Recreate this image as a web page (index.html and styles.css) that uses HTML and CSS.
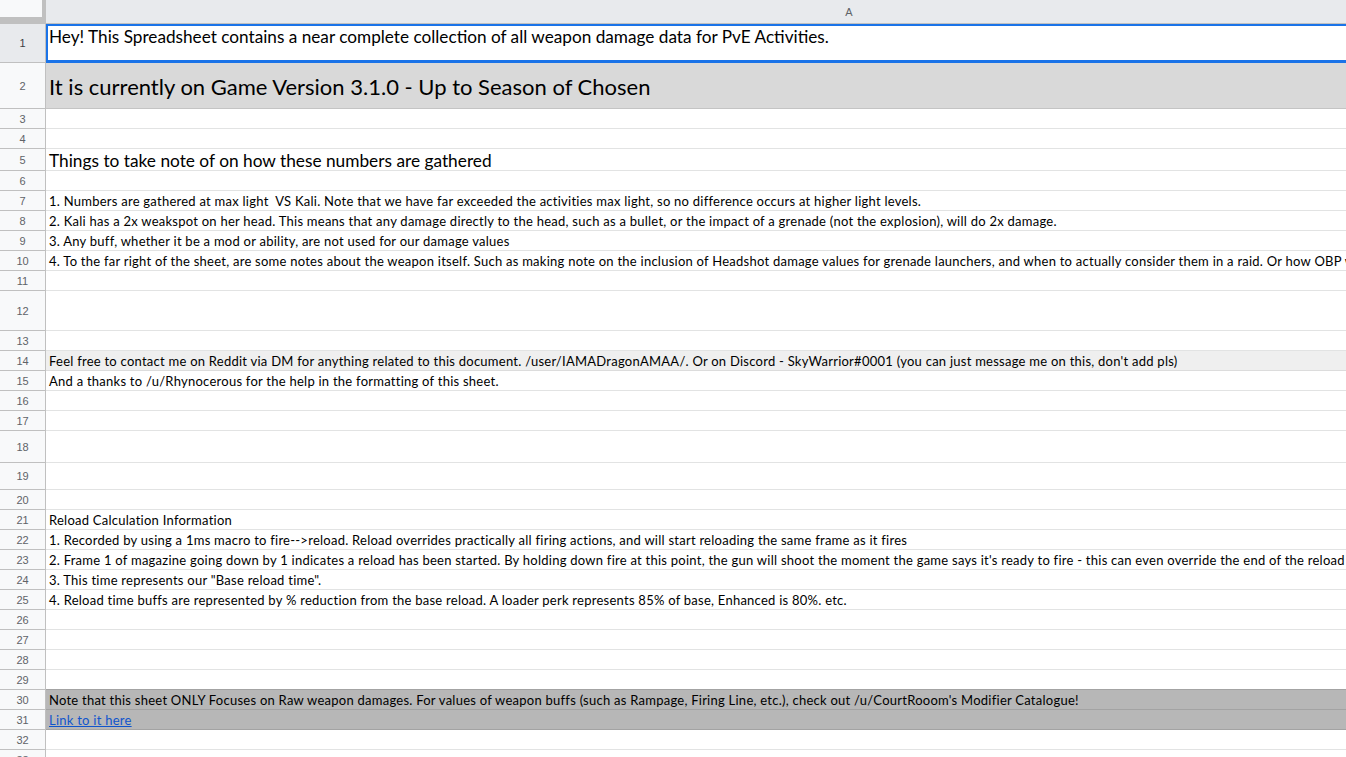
FILE: index.html
```html
<!DOCTYPE html>
<html>
<head>
<meta charset="utf-8">
<link rel="stylesheet" href="styles.css">
</head>
<body>
<div class="sheet">
  <div class="row head">
    <div class="corner"><div class="corner-in"></div></div>
    <div class="colhead">A</div>
  </div>
  <div class="row h39"><div class="rh sel">1</div><div class="cell c-title selected"><span>Hey! This Spreadsheet contains a near complete collection of all weapon damage data for PvE Activities.</span></div></div>
  <div class="row h46"><div class="rh">2</div><div class="cell c-big bg-d9"><span>It is currently on Game Version 3.1.0 - Up to Season of Chosen</span></div></div>
  <div class="row"><div class="rh">3</div><div class="cell"></div></div>
  <div class="row"><div class="rh">4</div><div class="cell"></div></div>
  <div class="row h22"><div class="rh">5</div><div class="cell c-sub"><span>Things to take note of on how these numbers are gathered</span></div></div>
  <div class="row"><div class="rh">6</div><div class="cell"></div></div>
  <div class="row"><div class="rh">7</div><div class="cell"><span>1. Numbers are gathered at max light  VS Kali. Note that we have far exceeded the activities max light, so no difference occurs at higher light levels.</span></div></div>
  <div class="row"><div class="rh">8</div><div class="cell"><span>2. Kali has a 2x weakspot on her head. This means that any damage directly to the head, such as a bullet, or the impact of a grenade (not the explosion), will do 2x damage.</span></div></div>
  <div class="row"><div class="rh">9</div><div class="cell"><span>3. Any buff, whether it be a mod or ability, are not used for our damage values</span></div></div>
  <div class="row"><div class="rh">10</div><div class="cell"><span>4. To the far right of the sheet, are some notes about the weapon itself. Such as making note on the inclusion of Headshot damage values for grenade launchers, and when to actually consider them in a raid. Or how OBP works with them.</span></div></div>
  <div class="row"><div class="rh">11</div><div class="cell"></div></div>
  <div class="row h40"><div class="rh">12</div><div class="cell"></div></div>
  <div class="row"><div class="rh">13</div><div class="cell"></div></div>
  <div class="row"><div class="rh">14</div><div class="cell bg-ef"><span>Feel free to contact me on Reddit via DM for anything related to this document. /user/IAMADragonAMAA/. Or on Discord - SkyWarrior#0001 (you can just message me on this, don't add pls)</span></div></div>
  <div class="row"><div class="rh">15</div><div class="cell"><span>And a thanks to /u/Rhynocerous for the help in the formatting of this sheet.</span></div></div>
  <div class="row"><div class="rh">16</div><div class="cell"></div></div>
  <div class="row"><div class="rh">17</div><div class="cell"></div></div>
  <div class="row h32"><div class="rh">18</div><div class="cell"></div></div>
  <div class="row h27"><div class="rh">19</div><div class="cell"></div></div>
  <div class="row"><div class="rh">20</div><div class="cell"></div></div>
  <div class="row"><div class="rh">21</div><div class="cell"><span>Reload Calculation Information</span></div></div>
  <div class="row"><div class="rh">22</div><div class="cell"><span>1. Recorded by using a 1ms macro to fire--&gt;reload. Reload overrides practically all firing actions, and will start reloading the same frame as it fires</span></div></div>
  <div class="row"><div class="rh">23</div><div class="cell"><span>2. Frame 1 of magazine going down by 1 indicates a reload has been started. By holding down fire at this point, the gun will shoot the moment the game says it's ready to fire - this can even override the end of the reload animation.</span></div></div>
  <div class="row"><div class="rh">24</div><div class="cell"><span>3. This time represents our "Base reload time".</span></div></div>
  <div class="row"><div class="rh">25</div><div class="cell"><span>4. Reload time buffs are represented by % reduction from the base reload. A loader perk represents 85% of base, Enhanced is 80%. etc.</span></div></div>
  <div class="row"><div class="rh">26</div><div class="cell"></div></div>
  <div class="row"><div class="rh">27</div><div class="cell"></div></div>
  <div class="row"><div class="rh">28</div><div class="cell"></div></div>
  <div class="row"><div class="rh">29</div><div class="cell dk-bottom"></div></div>
  <div class="row"><div class="rh">30</div><div class="cell bg-b7"><span>Note that this sheet ONLY Focuses on Raw weapon damages. For values of weapon buffs (such as Rampage, Firing Line, etc.), check out /u/CourtRooom's Modifier Catalogue!</span></div></div>
  <div class="row"><div class="rh">31</div><div class="cell bg-b7"><a class="link" href="#">Link to it here</a></div></div>
  <div class="row"><div class="rh">32</div><div class="cell"></div></div>
  <div class="row"><div class="rh">33</div><div class="cell"></div></div>
</div>
</body>
</html>
```
FILE: styles.css
```css
html, body {
  margin: 0;
  padding: 0;
  background: #ffffff;
  overflow: hidden;
}
.sheet {
  width: 1652px;
  font-family: "Lato", "Open Sans", sans-serif;
  color: #000;
}
.row {
  display: flex;
  height: 20px;
}
.row.head { height: 24px; }
.h22 { height: 22px; }
.h27 { height: 27px; }
.h32 { height: 32px; }
.h39 { height: 39px; }
.h40 { height: 40px; }
.h46 { height: 46px; }

.corner {
  width: 46px;
  flex: none;
  background: #c0c0c0;
  box-sizing: border-box;
}
.corner-in {
  width: 42px;
  height: 17px;
  background: #f8f9fa;
}
.colhead {
  flex: 1;
  box-sizing: border-box;
  background: #e8eaed;
  border-bottom: 1px solid #c0c0c0;
  display: flex;
  align-items: center;
  justify-content: center;
  font-family: "Liberation Sans", Arial, sans-serif;
  font-size: 11px;
  color: #5f6368;
  padding-top: 1px;
}
.rh {
  width: 46px;
  flex: none;
  box-sizing: border-box;
  background: #f8f9fa;
  border-right: 1px solid #c0c0c0;
  border-bottom: 1px solid #c0c0c0;
  display: flex;
  align-items: center;
  justify-content: center;
  font-family: "Liberation Sans", Arial, sans-serif;
  font-size: 11px;
  color: #5f6368;
}
.rh.sel { background: #e8eaed; color: #3c4043; }
.cell {
  flex: 1;
  box-sizing: border-box;
  border-bottom: 1px solid #e2e3e3;
  display: flex;
  align-items: center;
  padding-left: 3px;
  padding-top: 3px;
  font-size: 13px;
  letter-spacing: 0.25px;
  white-space: pre;
  overflow: hidden;
  min-width: 0;
}
.cell span { display: block; line-height: 1.2; }
.c-title {
  align-items: flex-start;
  padding-top: 3px;
  font-size: 17.2px;
  letter-spacing: 0;
}
.c-big { font-size: 22px; letter-spacing: 0; padding-top: 3px; }
.c-sub { font-size: 17.3px; letter-spacing: 0; padding-top: 3px; }
.selected { box-shadow: inset 0 0 0 2px #1a73e8; border-bottom-color: #1a73e8; }
.bg-d9 { background: #d9d9d9; border-bottom-color: #c4c4c4; }
.bg-ef { background: #efefef; border-bottom-color: #dcdcdc; }
.bg-b7 { background: #b7b7b7; border-bottom-color: #a3a3a3; }
.dk-bottom { border-bottom-color: #a3a3a3; }
.link {
  color: #1155cc;
  text-decoration: underline;
  line-height: 1.2;
}
```
